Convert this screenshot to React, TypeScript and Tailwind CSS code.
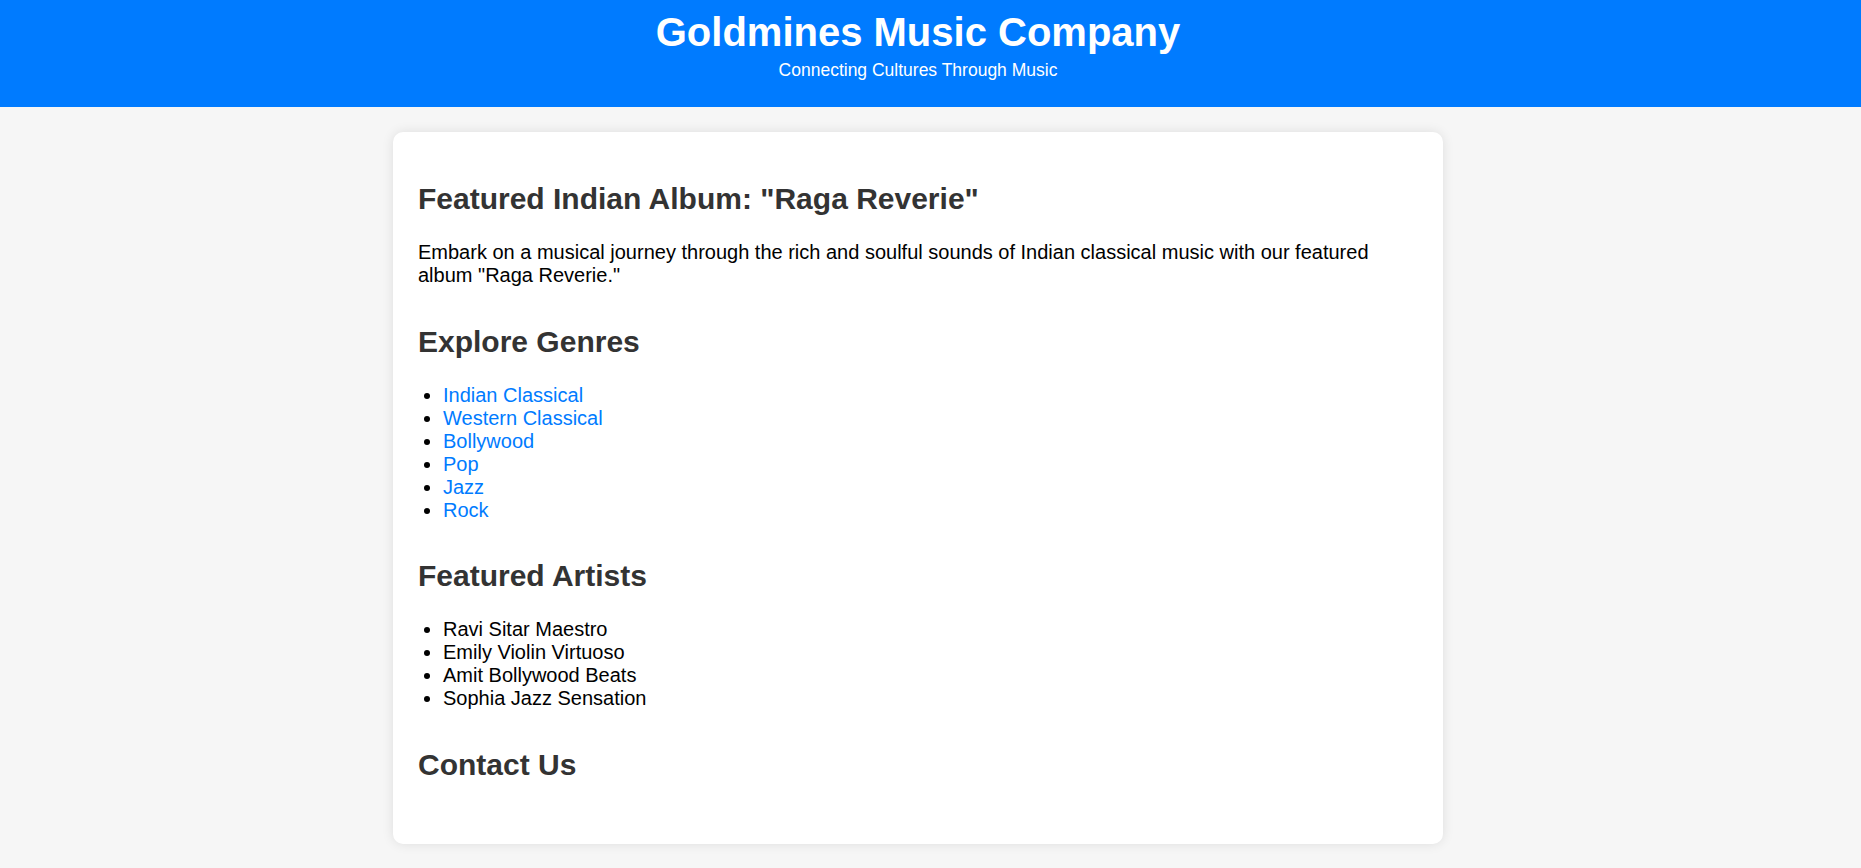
import React, { type JSX } from "react";

const genres = [
  "Indian Classical",
  "Western Classical",
  "Bollywood",
  "Pop",
  "Jazz",
  "Rock",
];

const artists = [
  "Ravi Sitar Maestro",
  "Emily Violin Virtuoso",
  "Amit Bollywood Beats",
  "Sophia Jazz Sensation",
];

const App = (): JSX.Element => {
  return (
    <div className="min-h-screen bg-[#f6f6f6] font-['Liberation_Sans',Arial,sans-serif] text-black">
      <header className="bg-[#007bff] text-white">
        <div className="pr-[25px] pt-[9px] pb-[27px] text-center">
          <h1 className="text-[40px] font-bold leading-[46px]">
            Goldmines Music Company
          </h1>
          <p className="mt-[5px] text-[17.5px] leading-[20px]">
            Connecting Cultures Through Music
          </p>
        </div>
      </header>

      <div className="pr-[25px] pt-[25px] pb-[25px]">
        <main className="mx-auto w-[1050px] rounded-[10px] bg-white px-[25px] pt-[50px] pb-[25px] shadow-[0_0_12px_rgba(0,0,0,0.1)]">
          <section className="flex flex-col gap-[25px] pb-[37.5px]">
            <h2 className="text-[30px] font-bold leading-[34px] text-[#333]">
              Featured Indian Album: "Raga Reverie"
            </h2>
            <p className="text-[20px] leading-[23px]">
              Embark on a musical journey through the rich and soulful sounds
              of Indian classical music with our featured album "Raga
              Reverie."
            </p>
          </section>

          <section className="flex flex-col gap-[25px] pb-[37.5px]">
            <h2 className="text-[30px] font-bold leading-[34px] text-[#333]">
              Explore Genres
            </h2>
            <ul className="list-disc pl-[25px] text-[20px] leading-[23px]">
              {genres.map((g) => (
                <li key={g}>
                  <a href="#" className="text-[#007bff]">
                    {g}
                  </a>
                </li>
              ))}
            </ul>
          </section>

          <section className="flex flex-col gap-[25px] pb-[37.5px]">
            <h2 className="text-[30px] font-bold leading-[34px] text-[#333]">
              Featured Artists
            </h2>
            <ul className="list-disc pl-[25px] text-[20px] leading-[23px]">
              {artists.map((a) => (
                <li key={a}>{a}</li>
              ))}
            </ul>
          </section>

          <section className="flex flex-col gap-[25px] pb-[37.5px]">
            <h2 className="text-[30px] font-bold leading-[34px] text-[#333]">
              Contact Us
            </h2>
          </section>
        </main>
      </div>
    </div>
  );
};

export default App;
